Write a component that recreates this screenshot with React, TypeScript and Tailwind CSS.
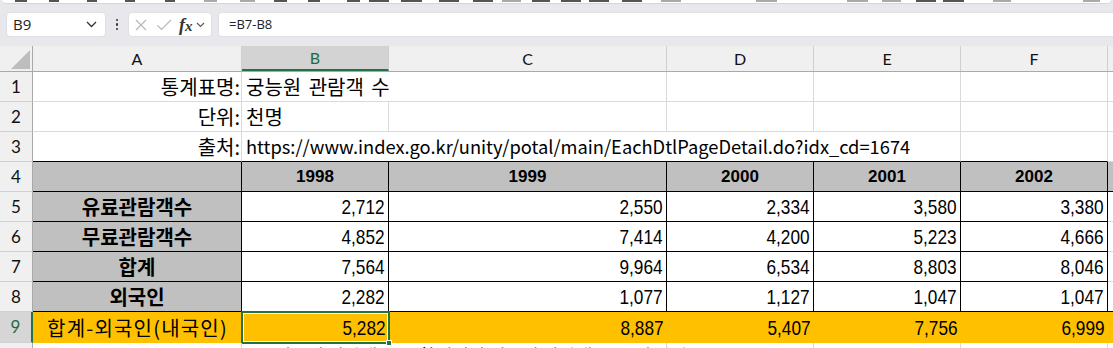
import React from "react";

const KR = "font-['Noto_Sans_CJK_KR',sans-serif]";
const NUM = "font-['Liberation_Sans',sans-serif]";
const LAT = "font-['Lato',sans-serif]";

const W = [209, 147, 278, 147, 147, 147, 120];
const LETTERS = ["A", "B", "C", "D", "E", "F", ""];

type Row = { label: string; vals: string[] };
const DATA: Row[] = [
  { label: "유료관람객수", vals: ["2,712", "2,550", "2,334", "3,580", "3,380"] },
  { label: "무료관람객수", vals: ["4,852", "7,414", "4,200", "5,223", "4,666"] },
  { label: "합계", vals: ["7,564", "9,964", "6,534", "8,803", "8,046"] },
  { label: "외국인", vals: ["2,282", "1,077", "1,127", "1,047", "1,047"] },
];
const TOTAL: Row = { label: "합계-외국인(내국인)", vals: ["5,282", "8,887", "5,407", "7,756", "6,999"] };
const YEARS = ["1998", "1999", "2000", "2001", "2002"];

const topMarks: [number, number, string][] = [
  [13, 25, "#555"], [47, 57, "#555"], [85, 95, "#555"], [123, 133, "#555"], [163, 173, "#555"],
  [202, 215, "#aaa"], [238, 253, "#aaa"], [272, 285, "#555"], [306, 318, "#555"], [345, 358, "#555"],
  [367, 387, "#555"], [399, 420, "#555"], [437, 457, "#555"], [471, 491, "#555"], [500, 519, "#aaa"],
  [530, 548, "#555"], [559, 579, "#555"], [587, 607, "#555"], [620, 640, "#555"], [659, 679, "#aaa"],
  [754, 775, "#aaa"], [845, 866, "#aaa"], [880, 899, "#aaa"], [914, 934, "#555"], [941, 962, "#555"],
  [991, 1009, "#aaa"], [1081, 1098, "#aaa"],
];

function RowHeader({ n, selected }: { n?: number; selected?: boolean }) {
  return (
    <div
      className={`w-[33px] shrink-0 flex items-center justify-center border-b border-b-[#d0d0d0] ${
        selected
          ? "bg-[#d6d6d6] text-[#1d6b40] border-r-2 border-r-[#217346]"
          : "bg-[#f0f0f0] text-[#111] border-r border-r-[#a9a9a9]"
      } ${LAT} text-[17px]`}
    >
      {n}
    </div>
  );
}

function Cell({
  i,
  className = "",
  children,
}: {
  i: number;
  className?: string;
  children?: React.ReactNode;
}) {
  return (
    <div style={{ width: W[i] }} className={`shrink-0 relative flex ${className}`}>
      {children}
    </div>
  );
}

function Num({ v }: { v: string }) {
  return (
    <span className={`${NUM} text-[21px] inline-block scale-x-[0.82] origin-right`}>{v}</span>
  );
}

export default function App() {
  return (
    <div className="w-[1113px] h-[348px] overflow-hidden bg-white flex flex-col">
      {/* toolbar band */}
      <div className="h-[46px] shrink-0 bg-[#e8e8ec] flex flex-col">
        <div className="h-[4px] mx-[2px] bg-white rounded-b-[4px] border-b border-[#d6d6da] overflow-hidden">
          <svg width="1113" height="3" className="block">
            {topMarks.map(([a, b, c], k) => (
              <rect key={k} x={a} y={0} width={b - a} height={2} fill={c} />
            ))}
          </svg>
        </div>
        <div className="flex items-center mt-[8px] h-[25px]">
          <div className="ml-[6px] w-[100px] h-[25px] bg-white rounded-[4px] border border-[#e0e0e4] flex items-center justify-between pl-[6px] pr-[8px]">
            <span className="font-['Open_Sans',sans-serif] text-[15px] text-[#222]">B9</span>
            <svg width="11" height="7" viewBox="0 0 11 7">
              <path d="M1 1 L5.5 5.5 L10 1" fill="none" stroke="#333" strokeWidth="1.3" />
            </svg>
          </div>
          <div className="w-[22px] flex flex-col items-center gap-[2px]">
            <span className="w-[2.5px] h-[2.5px] bg-[#333] rounded-full" />
            <span className="w-[2.5px] h-[2.5px] bg-[#333] rounded-full" />
            <span className="w-[2.5px] h-[2.5px] bg-[#333] rounded-full" />
          </div>
          <div className="w-[84px] h-[25px] bg-white rounded-[4px] border border-[#e0e0e4] flex items-center pl-[5px]">
            <svg width="14" height="14" viewBox="0 0 14 14">
              <path d="M2 2 L12 12 M12 2 L2 12" stroke="#b8b8b8" strokeWidth="1.2" />
            </svg>
            <svg width="17" height="14" viewBox="0 0 17 14" className="ml-[8px]">
              <path d="M1.5 7.5 L5.5 11.5 L15 2" fill="none" stroke="#b8b8b8" strokeWidth="1.2" />
            </svg>
            <span className="ml-[6px] font-['Liberation_Serif',serif] italic font-bold text-[18px] text-[#333] leading-none">
              f<span className="text-[15px]">x</span>
            </span>
            <svg width="9" height="6" viewBox="0 0 9 6" className="ml-[3px]">
              <path d="M1 1 L4.5 4.5 L8 1" fill="none" stroke="#555" strokeWidth="1.1" />
            </svg>
          </div>
          <div className="ml-[6px] flex-1 h-[25px] bg-white rounded-l-[4px] border border-[#e0e0e4] border-r-0 flex items-center pl-[10px]">
            <span className="font-['Open_Sans',sans-serif] text-[13px] text-[#222]">=B7-B8</span>
          </div>
        </div>
      </div>

      {/* column header */}
      <div className="h-[26px] shrink-0 flex bg-[#f0f0f0] border-b border-[#a9a9a9]">
        <div className="w-[33px] shrink-0 border-r border-[#a9a9a9] flex items-end justify-end pr-[2px] pb-[2px]">
          <svg width="19" height="19" viewBox="0 0 19 19">
            <path d="M19 0 L19 19 L0 19 Z" fill="#bdbdbd" />
          </svg>
        </div>
        {LETTERS.map((l, i) => (
          <div
            key={i}
            style={{ width: W[i] }}
            className={`shrink-0 flex items-center justify-center ${LAT} text-[16px] border-r border-[#cfcfcf] ${
              i === 1 ? "bg-[#d3d3d3] text-[#1d6b40] border-b-2 border-b-[#217346]" : "text-[#111]"
            }`}
          >
            {l}
          </div>
        ))}
      </div>

      {/* row 1 */}
      <div className="h-[30px] shrink-0 flex">
        <RowHeader n={1} />
        <Cell i={0} className="border-r border-b border-[#dadada] items-center justify-end pr-[1px]">
          <span className={`${KR} text-[20px]`}>통계표명:</span>
        </Cell>
        <Cell i={1} className="border-b border-[#dadada] items-center pl-[4px] z-10">
          <span className={`${KR} text-[20px] whitespace-nowrap [word-spacing:3px]`}>궁능원 관람객 수</span>
        </Cell>
        {[2, 3, 4, 5, 6].map((i) => (
          <Cell key={i} i={i} className="border-r border-b border-[#dadada]" />
        ))}
      </div>

      {/* row 2 */}
      <div className="h-[30px] shrink-0 flex">
        <RowHeader n={2} />
        <Cell i={0} className="border-r border-b border-[#dadada] items-center justify-end pr-[1px]">
          <span className={`${KR} text-[20px]`}>단위:</span>
        </Cell>
        <Cell i={1} className="border-r border-b border-[#dadada] items-center pl-[4px]">
          <span className={`${KR} text-[20px]`}>천명</span>
        </Cell>
        {[2, 3, 4, 5, 6].map((i) => (
          <Cell key={i} i={i} className="border-r border-b border-[#dadada]" />
        ))}
      </div>

      {/* row 3 */}
      <div className="h-[30px] shrink-0 flex">
        <RowHeader n={3} />
        <Cell i={0} className="border-r border-r-[#dadada] border-b border-b-black items-center justify-end pr-[1px]">
          <span className={`${KR} text-[20px]`}>출처:</span>
        </Cell>
        <Cell i={1} className="border-b border-black items-center pl-[4px] z-10">
          <span className={`${KR} text-[18.3px] whitespace-nowrap`}>
            https://www.index.go.kr/unity/potal/main/EachDtlPageDetail.do?idx_cd=1674
          </span>
        </Cell>
        <Cell i={2} className="border-b border-black" />
        <Cell i={3} className="border-b border-black" />
        <Cell i={4} className="border-r border-r-[#dadada] border-b border-b-black" />
        <Cell i={5} className="border-r border-r-[#dadada] border-b border-b-black" />
        <Cell i={6} className="border-b border-[#dadada]" />
      </div>

      {/* row 4 */}
      <div className="h-[30px] shrink-0 flex">
        <RowHeader n={4} />
        {[0, 1, 2, 3, 4, 5].map((i) => (
          <Cell key={i} i={i} className="bg-[#c0c0c0] border-r border-b border-black items-center justify-center">
            {i > 0 && <span className={`${NUM} font-bold text-[17px]`}>{YEARS[i - 1]}</span>}
          </Cell>
        ))}
        <Cell i={6} className="bg-[#c0c0c0] border-b border-black" />
      </div>

      {/* rows 5-8 */}
      {DATA.map((r, k) => (
        <div key={r.label} className="h-[30px] shrink-0 flex">
          <RowHeader n={5 + k} />
          <Cell i={0} className="bg-[#c0c0c0] border-r border-b border-black items-center justify-center">
            <span className={`${KR} font-bold text-[20px]`}>{r.label}</span>
          </Cell>
          {r.vals.map((v, j) => (
            <Cell key={j} i={j + 1} className="border-r border-b border-black items-center justify-end pr-[3px]">
              <Num v={v} />
            </Cell>
          ))}
          <Cell i={6} className={`border-b ${k === 3 ? "border-black" : "border-[#dadada]"}`} />
        </div>
      ))}

      {/* row 9 */}
      <div className="h-[31px] shrink-0 flex bg-[#ffc000]">
        <RowHeader n={9} selected />
        <Cell i={0} className="items-center justify-center">
          <span className={`${KR} text-[20px] tracking-[1.2px]`}>{TOTAL.label}</span>
        </Cell>
        {TOTAL.vals.map((v, j) => (
          <Cell key={j} i={j + 1} className="items-center justify-end pr-[3px]">
            <Num v={v} />
            {j === 0 && (
              <>
                <div className="absolute -left-[1px] -top-[1px] -right-[1px] -bottom-[1px] border-2 border-[#217346] pointer-events-none">
                  <div className="w-full h-full border border-white" />
                </div>
                <div className="absolute -right-[3px] -bottom-[3px] w-[6px] h-[6px] bg-[#217346] border border-white" />
              </>
            )}
          </Cell>
        ))}
        <Cell i={6} />
      </div>

      {/* row 10 (partial) */}
      <div className="h-[30px] shrink-0 flex">
        <RowHeader />
        <Cell i={0} className="border-r border-[#dadada]" />
        <Cell i={1} className="items-start pt-[3px] pl-[10px]">
          <span className={`${KR} text-[18px] leading-[18px] whitespace-nowrap`}>
            ※ 내국인 관람객 수는 합계에서 외국인 관람객 수를 뺀 값임
          </span>
        </Cell>
        <Cell i={2} className="border-r border-[#dadada]" />
        <Cell i={3} className="border-r border-[#dadada]" />
        <Cell i={4} className="border-r border-[#dadada]" />
        <Cell i={5} className="border-r border-[#dadada]" />
      </div>
    </div>
  );
}
